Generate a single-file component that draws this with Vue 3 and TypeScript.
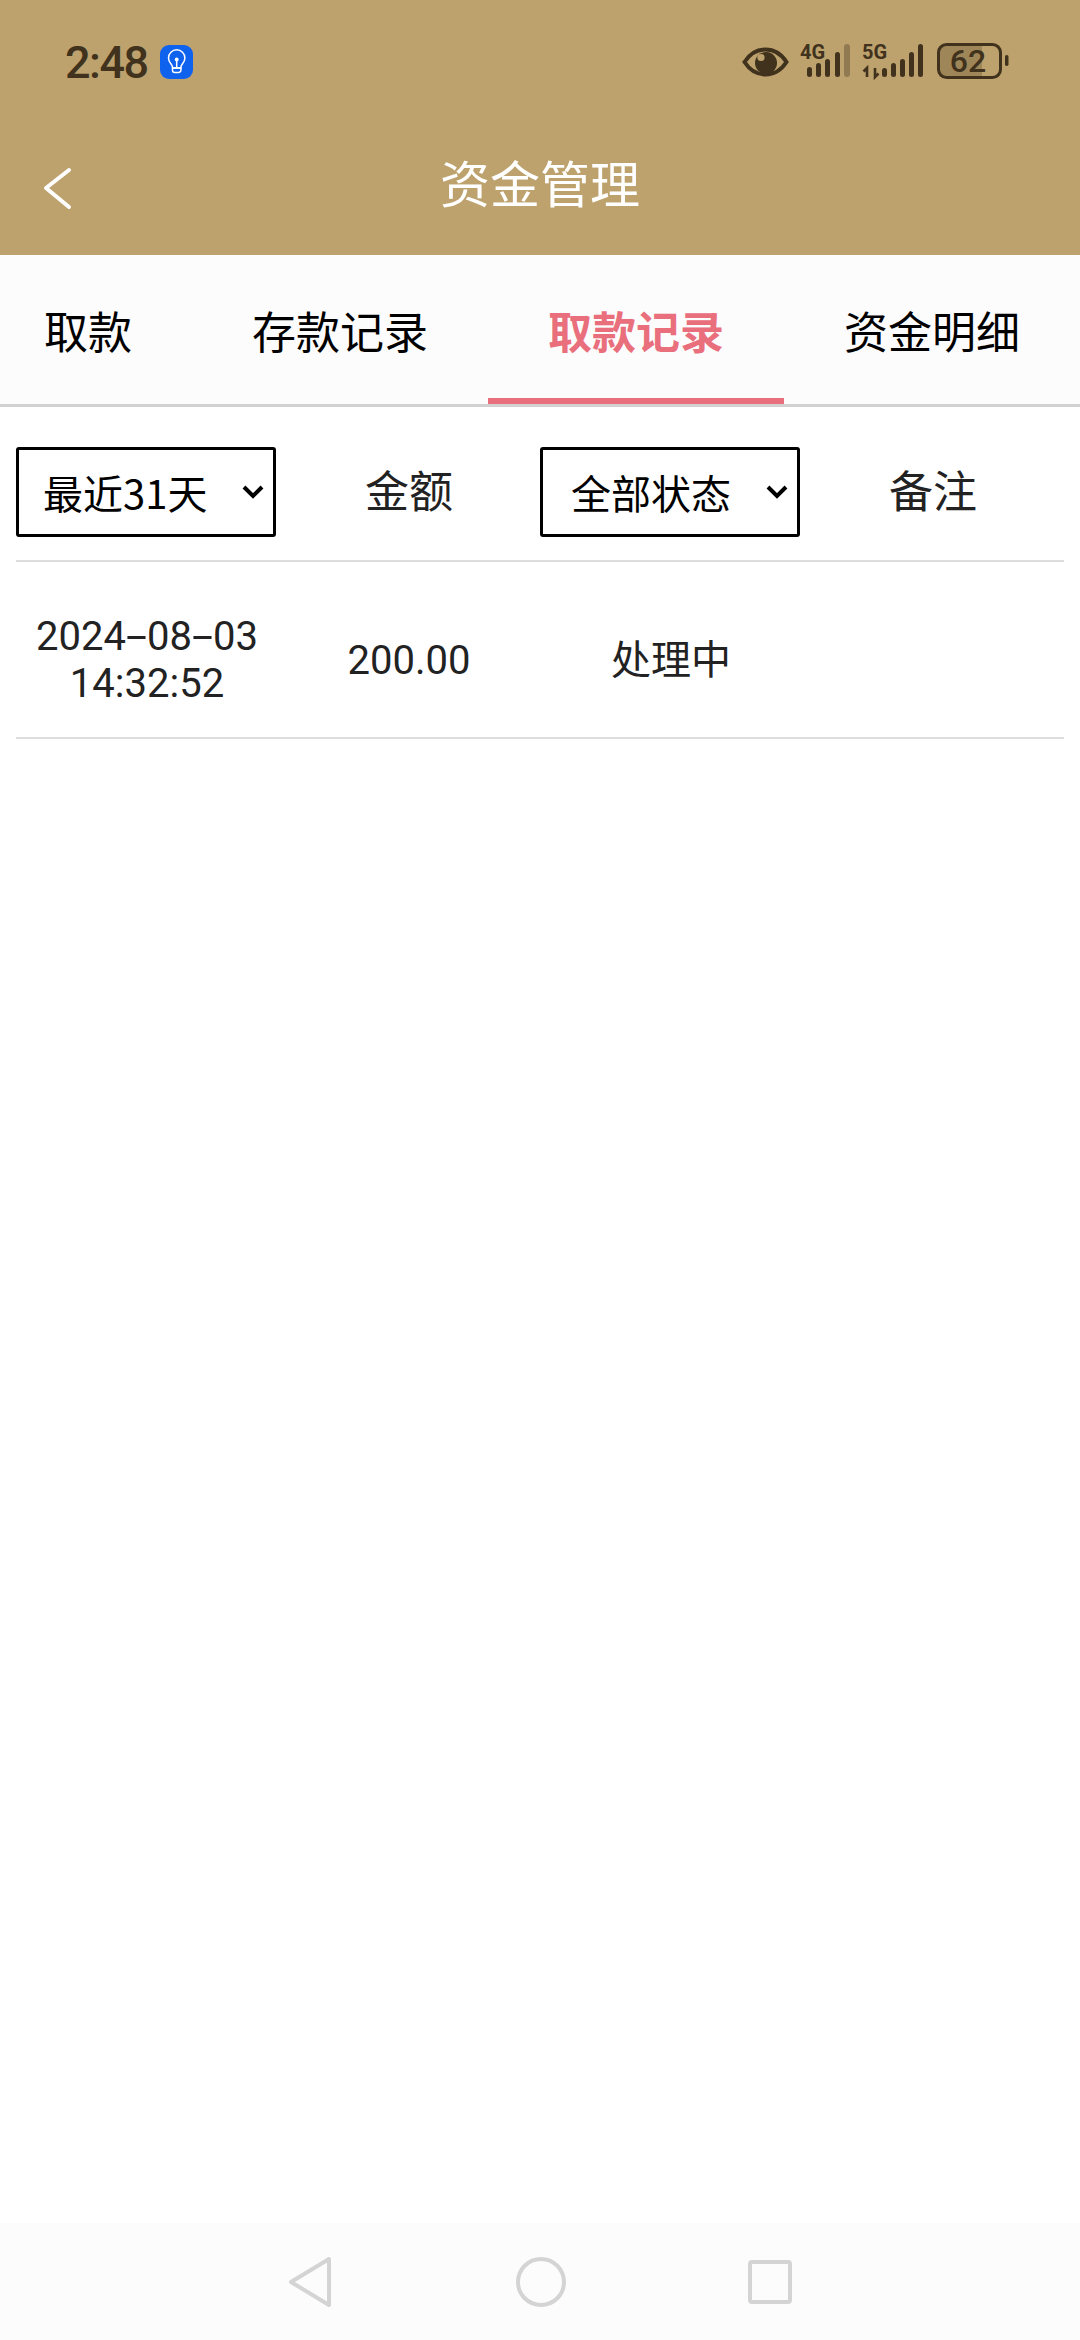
<script setup lang="ts">
const tabs = [
  { label: '取款', cls: 'first' },
  { label: '存款记录', cls: '' },
  { label: '取款记录', cls: 'active' },
  { label: '资金明细', cls: '' },
]
</script>

<template>
  <div class="page">
    <header class="head">
      <div class="status">
        <div class="status-left">
          <span class="time">2:48</span>
          <svg class="bulb" width="33" height="34" viewBox="0 0 33 34">
            <rect width="33" height="34" rx="9" fill="#0f62ee" />
            <path d="M12.500 23v-1c0-2.500-4-4-4-9a8.200 8.200 0 0 1 16.400 0c0 5-4 6.500-4 9v1z" fill="none" stroke="#fff" stroke-width="1.500" />
            <path d="M12.500 23h8.400v2.200a2.300 2.300 0 0 1-2.300 2.300h-3.800a2.300 2.300 0 0 1-2.300-2.300z" fill="none" stroke="#fff" stroke-width="1.500" />
            <path d="M16.700 14.500V23" stroke="#fff" stroke-width="1.500" />
            <circle cx="16.700" cy="14.500" r="1.900" fill="#fff" />
          </svg>
        </div>
        <svg class="status-right" width="270" height="42" viewBox="0 0 270 42">
          <path d="M4.500 22C10 13.500 17 9.500 25.500 9.500S41 13.500 46.500 22C41 30.500 34 34.500 25.500 34.500S10 30.500 4.500 22z" fill="none" stroke="#40321c" stroke-width="4" />
          <circle cx="26" cy="23" r="11" fill="#40321c" />
          <circle cx="21" cy="17.500" r="3.600" fill="#bea26e" />
          <text x="60" y="19" class="net">4G</text>
          <g fill="#40321c">
            <rect x="67" y="27" width="5" height="10" rx="2.500" />
            <rect x="76" y="23" width="5" height="14" rx="2.500" />
            <rect x="85" y="19" width="5" height="18" rx="2.500" />
            <rect x="95" y="12" width="5" height="25" rx="2.500" />
          </g>
          <rect x="104" y="4" width="6" height="33" rx="3" fill="#40321c" opacity=".35" />
          <text x="122" y="19" class="net">5G</text>
          <path d="M127 37v-9l-3.500 3.500M135 28v9l3.500-3.500" fill="none" stroke="#40321c" stroke-width="2.600" />
          <g fill="#40321c">
            <rect x="142" y="28" width="5" height="9" rx="2.500" />
            <rect x="151" y="23" width="5" height="14" rx="2.500" />
            <rect x="160" y="19" width="5" height="18" rx="2.500" />
            <rect x="169" y="12" width="5" height="25" rx="2.500" />
            <rect x="178" y="4" width="5" height="33" rx="2.500" />
          </g>
          <path d="M205 5h37v32h-37a6 6 0 0 1-6-6V11a6 6 0 0 1 6-6z" fill="#40321c" opacity=".25" />
          <rect x="198.500" y="4.500" width="62" height="33" rx="8" fill="none" stroke="#40321c" stroke-width="3" />
          <text x="228" y="32" class="batt" text-anchor="middle">62</text>
          <rect x="265" y="15" width="3.500" height="11" rx="1.700" fill="#40321c" />
        </svg>
      </div>
      <div class="title-bar">
        <svg class="back" width="30" height="44" viewBox="0 0 30 44">
          <path d="M26 3 3 21l23 19" fill="none" stroke="#fff" stroke-width="4" stroke-linecap="round" stroke-linejoin="round" />
        </svg>
        <h1 class="title">资金管理</h1>
      </div>
    </header>

    <nav class="tabs">
      <div v-for="t in tabs" :key="t.label" class="tab" :class="t.cls">{{ t.label }}</div>
    </nav>

    <main class="table">
      <div class="row head-row">
        <div class="sel-wrap">
          <select class="sel"><option>最近31天</option></select>
          <svg class="chev" width="24" height="16" viewBox="0 0 24 16">
            <path d="M3 3l9 9 9-9" fill="none" stroke="#000" stroke-width="4" />
          </svg>
        </div>
        <div class="cell">金额</div>
        <div class="sel-wrap">
          <select class="sel sel2"><option>全部状态</option></select>
          <svg class="chev" width="24" height="16" viewBox="0 0 24 16">
            <path d="M3 3l9 9 9-9" fill="none" stroke="#000" stroke-width="4" />
          </svg>
        </div>
        <div class="cell">备注</div>
      </div>
      <div class="row data-row">
        <div class="num">2024<span class="dash">-</span>08<span class="dash">-</span>03<br />14:32:52</div>
        <div class="num">200.00</div>
        <div>处理中</div>
        <div></div>
      </div>
    </main>

    <footer class="nav">
      <svg class="ic-back" width="44" height="52" viewBox="0 0 44 52">
        <path d="M41 3 3 26l38 23z" fill="none" stroke="#d4d4d4" stroke-width="4" stroke-linejoin="round" />
      </svg>
      <svg class="ic-home" width="50" height="52" viewBox="0 0 50 52">
        <circle cx="25" cy="26" r="23" fill="none" stroke="#d4d4d4" stroke-width="4" />
      </svg>
      <svg class="ic-recent" width="44" height="46" viewBox="0 0 44 46">
        <rect x="2" y="3" width="40" height="40" rx="2" fill="none" stroke="#d4d4d4" stroke-width="4" />
      </svg>
    </footer>
  </div>
</template>

<style>
html, body { margin: 0; background: #fff; }
</style>

<style scoped>
.page {
  width: 1080px;
  height: 2340px;
  overflow: hidden;
  display: flex;
  flex-direction: column;
  background: #fff;
  font-family: "Noto Sans CJK SC", "Noto Sans", sans-serif;
}
.head { height: 255px; flex: none; background: #bea26e; display: flex; flex-direction: column; }
.status {
  height: 124px;
  box-sizing: border-box;
  padding: 37px 0 0 65px;
  display: flex;
  justify-content: space-between;
  align-items: flex-start;
}
.status-left { display: flex; align-items: center; gap: 12px; height: 50px; }
.time { font: 500 45px Roboto, sans-serif; letter-spacing: -1.500px; color: #40321c; }
.status-right { margin-right: 70px; margin-top: 3px; }
.net { font: 700 20px Roboto, sans-serif; fill: #40321c; }
.batt { font: 500 32px Roboto, sans-serif; fill: #40321c; }
.title-bar { position: relative; flex: 1; display: flex; align-items: flex-start; justify-content: center; padding-top: 25px; }
.back { position: absolute; left: 43px; top: 43px; }
.title { margin: 0; font-size: 50px; font-weight: 400; line-height: 64px; color: #fff; }
.tabs {
  height: 152px;
  flex: none;
  box-sizing: border-box;
  display: flex;
  background: #fcfcfc;
  border-bottom: 3px solid #d2d2d2;
}
.tab {
  position: relative;
  width: 296px;
  height: 149px;
  box-sizing: border-box;
  padding-top: 2px;
  text-align: center;
  font-size: 44px;
  line-height: 146px;
  color: #000;
}
.tab.first { width: 192px; padding-right: 16px; }
.tab.active { color: #e96f7c; font-weight: 700; }
.tab.active::after {
  content: "";
  position: absolute;
  left: 0;
  right: 0;
  bottom: 0;
  height: 6px;
  background: #e96f7c;
}
.table { flex: 1; padding: 0 16px; }
.row {
  display: grid;
  grid-template-columns: repeat(4, 1fr);
  box-sizing: border-box;
  border-bottom: 2px solid #ddd;
  color: #222;
  text-align: center;
  align-items: center;
}
.head-row { height: 155px; padding: 40px 0 23px; font-size: 44px; }
.cell { padding-bottom: 6px; }
.data-row { height: 177px; padding-top: 15px; font-size: 40px; line-height: 47px; }
.num { font-family: Roboto, sans-serif; padding-top: 6px; }
.dash { display: inline-block; margin: 0 5px; transform: scaleX(1.900); }
.sel-wrap { position: relative; width: 260px; height: 90px; }
.sel {
  appearance: none;
  width: 260px;
  height: 90px;
  display: block;
  box-sizing: border-box;
  border: 3px solid #000;
  border-radius: 3px;
  background: #fff;
  color: #000;
  font-family: "Noto Sans CJK SC", sans-serif;
  font-size: 40px;
  padding: 0 0 0 24px;
}
.sel2 { padding-left: 28px; }
.chev { position: absolute; right: 11px; top: 37px; }
.nav {
  height: 117px;
  flex: none;
  box-sizing: border-box;
  background: #fcfcfc;
  display: flex;
  justify-content: center;
  align-items: flex-start;
  padding-top: 33px;
}
.ic-back { margin-right: 184px; }
.ic-home { margin-right: 182px; }
.ic-recent { margin-top: 3px; }
</style>
